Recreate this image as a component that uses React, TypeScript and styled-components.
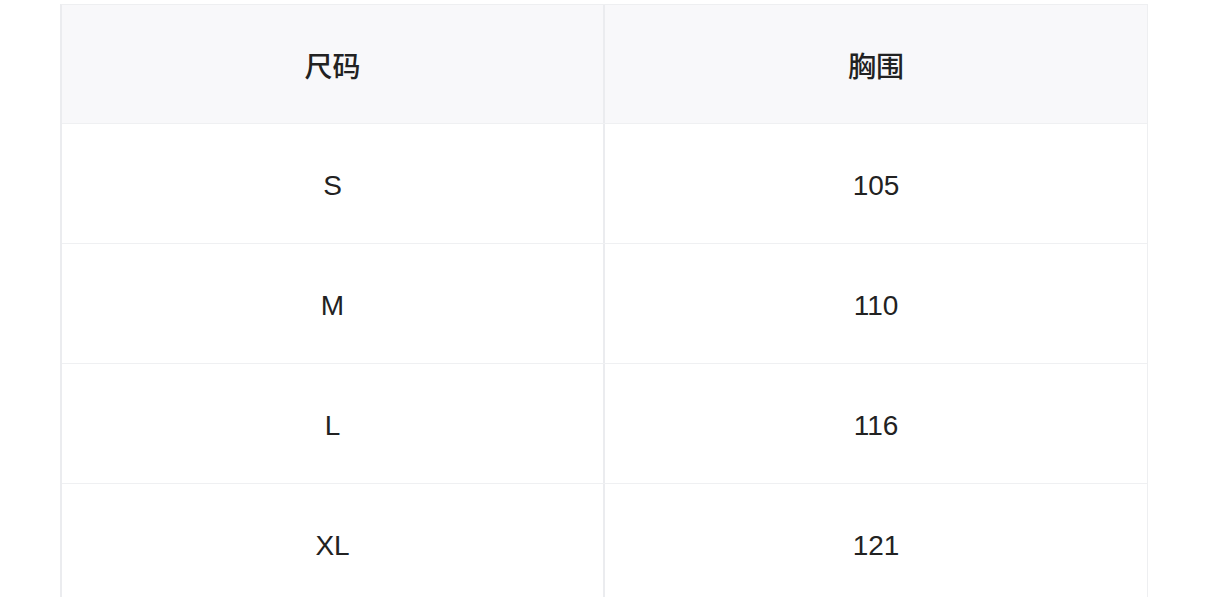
import React from 'react';
import styled, { createGlobalStyle } from 'styled-components';

const GlobalStyle = createGlobalStyle`
  body {
    margin: 0;
    background: #ffffff;
    font-family: "Liberation Sans", "Noto Sans CJK SC", sans-serif;
  }
`;

const rows = [
  { size: 'S', chest: '105' },
  { size: 'M', chest: '110' },
  { size: 'L', chest: '116' },
  { size: 'XL', chest: '121' },
];

function App() {
  return (
    <>
      <GlobalStyle />
      <Page>
        <Table>
          <Row header>
            <Cell header first>尺码</Cell>
            <Cell header>胸围</Cell>
          </Row>
          {rows.map((r) => (
            <Row key={r.size}>
              <Cell first>{r.size}</Cell>
              <Cell>{r.chest}</Cell>
            </Row>
          ))}
        </Table>
      </Page>
    </>
  );
}

export default App;

const Page = styled.div`
  padding: 4px 58px 0 60px;
`;

const Table = styled.div`
  width: 1088px;
  border-top: 1px solid #eeeff1;
  border-left: 2px solid #ebecef;
  border-right: 1px solid #eeeff1;
  box-sizing: border-box;
`;

const Row = styled.div<{ header?: boolean }>`
  display: grid;
  grid-template-columns: 543px 1fr;
  height: ${(p) => (p.header ? '119px' : '120px')};
  box-sizing: border-box;
  border-bottom: 1px solid #eff0f2;
  background: ${(p) => (p.header ? '#f8f8fa' : '#ffffff')};
`;

const Cell = styled.div<{ header?: boolean; first?: boolean }>`
  display: flex;
  align-items: center;
  justify-content: center;
  padding-top: ${(p) => (p.header ? '2px' : '4px')};
  font-size: 28px;
  color: #222222;
  font-weight: ${(p) => (p.header ? 500 : 400)};
  border-right: ${(p) => (p.first ? '2px solid #ebecef' : 'none')};
  font-family: ${(p) =>
    p.header
      ? '"Noto Sans CJK SC", sans-serif'
      : '"Liberation Sans", "Noto Sans CJK SC", sans-serif'};
`;
